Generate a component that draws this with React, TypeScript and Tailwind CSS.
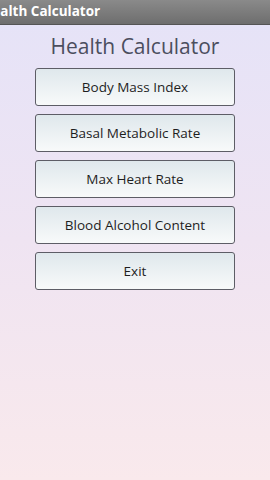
import React from "react";

const items = ["Body Mass Index", "Basal Metabolic Rate", "Max Heart Rate", "Blood Alcohol Content", "Exit"];

export default function App() {
  return (
    <div className="w-[270px] h-[480px] overflow-hidden flex flex-col bg-gradient-to-b from-[#e5e3f8] via-[#efe4f2] to-[#f9e9ec]" style={{ fontFamily: '"Open Sans", "DejaVu Sans", sans-serif' }}>
      <div className="h-[25px] shrink-0 bg-gradient-to-b from-[#8a8a8a] to-[#6e6e6e] border-b border-[#555] flex items-center overflow-hidden">
        <span className="text-white font-bold text-[13.5px] ml-[-18px] whitespace-nowrap leading-none">Health Calculator</span>
      </div>
      <div className="text-center text-[21px] text-[#4b4e5e] mt-[7px] leading-[28px]">Health Calculator</div>
      <div className="flex flex-col items-center gap-[8px] mt-[8px]">
        {items.map((t) => (
          <div key={t} className="w-[200px] h-[38px] rounded-[3px] border border-[#5d5d66] bg-gradient-to-b from-[#dfe8ec] to-[#f8fafa] flex items-center justify-center text-[13.5px] text-[#1e1e1e]">
            {t}
          </div>
        ))}
      </div>
    </div>
  );
}
